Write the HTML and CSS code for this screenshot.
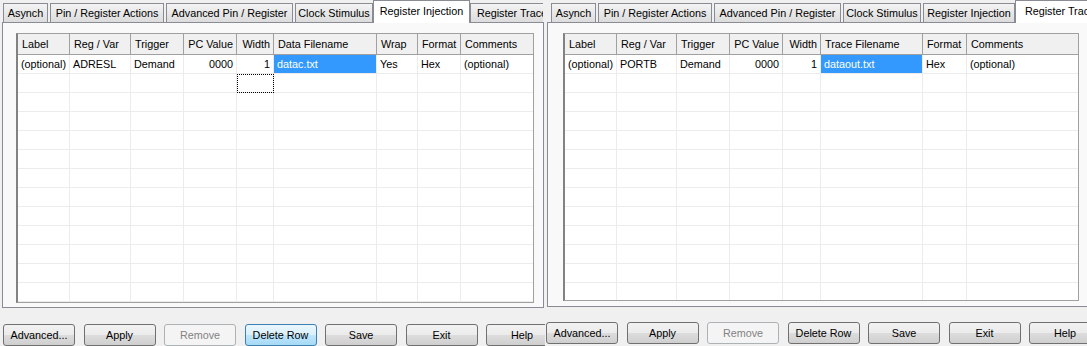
FILE: index.html
```html
<!DOCTYPE html>
<html>
<head>
<meta charset="utf-8">
<title>Stimulus</title>
<link rel="stylesheet" href="styles.css">
</head>
<body>
<div class="screen">
  <section class="panel panel-left">
    <div class="tabs">
      <div class="tab t-asynch">Asynch</div>
      <div class="tab t-pin">Pin / Register Actions</div>
      <div class="tab t-adv">Advanced Pin / Register</div>
      <div class="tab t-clock">Clock Stimulus</div>
      <div class="tab t-inj selected">Register Injection</div>
      <div class="tab t-trace">Register Trace</div>
    </div>
    <div class="tabbody">
      <div class="grid">
        <div class="row head">
          <div class="cell">Label</div><div class="cell">Reg / Var</div><div class="cell">Trigger</div><div class="cell num">PC Value</div><div class="cell num">Width</div><div class="cell">Data Filename</div><div class="cell">Wrap</div><div class="cell">Format</div><div class="cell">Comments</div>
        </div>
        <div class="row">
          <div class="cell">(optional)</div><div class="cell">ADRESL</div><div class="cell">Demand</div><div class="cell num">0000</div><div class="cell num">1</div><div class="cell sel">datac.txt</div><div class="cell">Yes</div><div class="cell">Hex</div><div class="cell">(optional)</div>
        </div>
        <div class="row"><div class="cell"></div><div class="cell"></div><div class="cell"></div><div class="cell"></div><div class="cell focus"></div><div class="cell"></div><div class="cell"></div><div class="cell"></div><div class="cell"></div></div>
        <div class="row"><div class="cell"></div><div class="cell"></div><div class="cell"></div><div class="cell"></div><div class="cell"></div><div class="cell"></div><div class="cell"></div><div class="cell"></div><div class="cell"></div></div>
        <div class="row"><div class="cell"></div><div class="cell"></div><div class="cell"></div><div class="cell"></div><div class="cell"></div><div class="cell"></div><div class="cell"></div><div class="cell"></div><div class="cell"></div></div>
        <div class="row"><div class="cell"></div><div class="cell"></div><div class="cell"></div><div class="cell"></div><div class="cell"></div><div class="cell"></div><div class="cell"></div><div class="cell"></div><div class="cell"></div></div>
        <div class="row"><div class="cell"></div><div class="cell"></div><div class="cell"></div><div class="cell"></div><div class="cell"></div><div class="cell"></div><div class="cell"></div><div class="cell"></div><div class="cell"></div></div>
        <div class="row"><div class="cell"></div><div class="cell"></div><div class="cell"></div><div class="cell"></div><div class="cell"></div><div class="cell"></div><div class="cell"></div><div class="cell"></div><div class="cell"></div></div>
        <div class="row"><div class="cell"></div><div class="cell"></div><div class="cell"></div><div class="cell"></div><div class="cell"></div><div class="cell"></div><div class="cell"></div><div class="cell"></div><div class="cell"></div></div>
        <div class="row"><div class="cell"></div><div class="cell"></div><div class="cell"></div><div class="cell"></div><div class="cell"></div><div class="cell"></div><div class="cell"></div><div class="cell"></div><div class="cell"></div></div>
        <div class="row"><div class="cell"></div><div class="cell"></div><div class="cell"></div><div class="cell"></div><div class="cell"></div><div class="cell"></div><div class="cell"></div><div class="cell"></div><div class="cell"></div></div>
        <div class="row"><div class="cell"></div><div class="cell"></div><div class="cell"></div><div class="cell"></div><div class="cell"></div><div class="cell"></div><div class="cell"></div><div class="cell"></div><div class="cell"></div></div>
        <div class="row"><div class="cell"></div><div class="cell"></div><div class="cell"></div><div class="cell"></div><div class="cell"></div><div class="cell"></div><div class="cell"></div><div class="cell"></div><div class="cell"></div></div>
        <div class="row"><div class="cell"></div><div class="cell"></div><div class="cell"></div><div class="cell"></div><div class="cell"></div><div class="cell"></div><div class="cell"></div><div class="cell"></div><div class="cell"></div></div>
        <div class="row"><div class="cell"></div><div class="cell"></div><div class="cell"></div><div class="cell"></div><div class="cell"></div><div class="cell"></div><div class="cell"></div><div class="cell"></div><div class="cell"></div></div>
      </div>
    </div>
    <div class="buttons">
      <button class="btn">Advanced...</button>
      <button class="btn">Apply</button>
      <button class="btn" disabled>Remove</button>
      <button class="btn hot">Delete Row</button>
      <button class="btn">Save</button>
      <button class="btn">Exit</button>
      <button class="btn">Help</button>
    </div>
  </section>

  <section class="panel panel-right">
    <div class="tabs">
      <div class="tab t-asynch">Asynch</div>
      <div class="tab t-pin">Pin / Register Actions</div>
      <div class="tab t-adv">Advanced Pin / Register</div>
      <div class="tab t-clock">Clock Stimulus</div>
      <div class="tab t-inj">Register Injection</div>
      <div class="tab t-trace selected">Register Trace</div>
    </div>
    <div class="tabbody">
      <div class="grid">
        <div class="row head">
          <div class="cell">Label</div><div class="cell">Reg / Var</div><div class="cell">Trigger</div><div class="cell num">PC Value</div><div class="cell num">Width</div><div class="cell">Trace Filename</div><div class="cell">Format</div><div class="cell">Comments</div>
        </div>
        <div class="row">
          <div class="cell">(optional)</div><div class="cell">PORTB</div><div class="cell">Demand</div><div class="cell num">0000</div><div class="cell num">1</div><div class="cell sel">dataout.txt</div><div class="cell">Hex</div><div class="cell">(optional)</div>
        </div>
        <div class="row"><div class="cell"></div><div class="cell"></div><div class="cell"></div><div class="cell"></div><div class="cell"></div><div class="cell"></div><div class="cell"></div><div class="cell"></div></div>
        <div class="row"><div class="cell"></div><div class="cell"></div><div class="cell"></div><div class="cell"></div><div class="cell"></div><div class="cell"></div><div class="cell"></div><div class="cell"></div></div>
        <div class="row"><div class="cell"></div><div class="cell"></div><div class="cell"></div><div class="cell"></div><div class="cell"></div><div class="cell"></div><div class="cell"></div><div class="cell"></div></div>
        <div class="row"><div class="cell"></div><div class="cell"></div><div class="cell"></div><div class="cell"></div><div class="cell"></div><div class="cell"></div><div class="cell"></div><div class="cell"></div></div>
        <div class="row"><div class="cell"></div><div class="cell"></div><div class="cell"></div><div class="cell"></div><div class="cell"></div><div class="cell"></div><div class="cell"></div><div class="cell"></div></div>
        <div class="row"><div class="cell"></div><div class="cell"></div><div class="cell"></div><div class="cell"></div><div class="cell"></div><div class="cell"></div><div class="cell"></div><div class="cell"></div></div>
        <div class="row"><div class="cell"></div><div class="cell"></div><div class="cell"></div><div class="cell"></div><div class="cell"></div><div class="cell"></div><div class="cell"></div><div class="cell"></div></div>
        <div class="row"><div class="cell"></div><div class="cell"></div><div class="cell"></div><div class="cell"></div><div class="cell"></div><div class="cell"></div><div class="cell"></div><div class="cell"></div></div>
        <div class="row"><div class="cell"></div><div class="cell"></div><div class="cell"></div><div class="cell"></div><div class="cell"></div><div class="cell"></div><div class="cell"></div><div class="cell"></div></div>
        <div class="row"><div class="cell"></div><div class="cell"></div><div class="cell"></div><div class="cell"></div><div class="cell"></div><div class="cell"></div><div class="cell"></div><div class="cell"></div></div>
        <div class="row"><div class="cell"></div><div class="cell"></div><div class="cell"></div><div class="cell"></div><div class="cell"></div><div class="cell"></div><div class="cell"></div><div class="cell"></div></div>
        <div class="row"><div class="cell"></div><div class="cell"></div><div class="cell"></div><div class="cell"></div><div class="cell"></div><div class="cell"></div><div class="cell"></div><div class="cell"></div></div>
        <div class="row"><div class="cell"></div><div class="cell"></div><div class="cell"></div><div class="cell"></div><div class="cell"></div><div class="cell"></div><div class="cell"></div><div class="cell"></div></div>
      </div>
    </div>
    <div class="buttons">
      <button class="btn">Advanced...</button>
      <button class="btn">Apply</button>
      <button class="btn" disabled>Remove</button>
      <button class="btn">Delete Row</button>
      <button class="btn">Save</button>
      <button class="btn">Exit</button>
      <button class="btn">Help</button>
    </div>
  </section>
</div>
</body>
</html>
```

FILE: styles.css
```css
* { box-sizing: border-box; }
html, body { margin: 0; padding: 0; }
body {
  background: #f0f0f0;
  font-family: "Liberation Sans", Arial, sans-serif;
  font-size: 10.8px;
  color: #000;
  width: 1087px;
  height: 346px;
  overflow: hidden;
}
.screen { display: flex; height: 346px; }
.panel { flex: none; overflow: hidden; height: 346px; }
.panel-left { width: 545px; }
.panel-right { width: 542px; }

/* tabs */
.tabs {
  display: flex;
  align-items: flex-start;
  height: 23px;
  margin-bottom: -1px;
  padding-left: 3px;
  width: 543px;
  overflow: hidden;
  position: relative;
  z-index: 1;
}
.panel-right .tabs { padding-left: 6px; width: 542px; }
.tab {
  flex: none;
  height: 19px;
  margin-top: 3px;
  margin-right: 2px;
  border: 1px solid #898c95;
  border-bottom: none;
  background: linear-gradient(#f3f3f3, #e8e8e8 50%, #dcdcdc);
  text-align: center;
  line-height: 18px;
  white-space: nowrap;
  overflow: hidden;
}
.t-asynch { width: 45px; }
.t-pin { width: 114px; }
.t-adv { width: 127px; }
.t-clock { width: 78px; }
.t-inj { width: 92px; }
.t-trace { width: 84px; }
.tab.selected {
  margin-top: 0;
  height: 23px;
  margin-left: -2px;
  margin-right: 0;
  padding: 0 2px;
  background: #fff;
  line-height: 21px;
}
.t-inj.selected { width: 97px; }
.t-trace.selected { width: 90px; }

/* tab page */
.tabbody {
  margin-left: 2px;
  width: 542px;
  height: 286px;
  border: 1px solid #898c95;
  background: #f9f9f9;
  padding: 10px 0 0 13px;
}
.panel-right .tabbody { height: 285px; padding-left: 15px; width: 545px; }

/* grid */
.grid {
  width: 518px;
  height: 270px;
  background: #fff;
  border-top: 1px solid #a0a0a0;
  border-left: 2px solid #828282;
  border-right: 1px solid #a0a0a0;
  border-bottom: 1px solid #a0a0a0;
  overflow: hidden;
}
.panel-right .grid { width: 516px; height: 268px; }
.row { display: grid; height: 19px; }
.panel-left .row { grid-template-columns: 52px 61px 53px 53px 37px 103px 41px 43px 72px; }
.panel-right .row { grid-template-columns: 52px 60px 53px 53px 38px 102px 44px 111px; }
.row.head { height: 21px; background: #f0f0f0; }
.cell {
  border-right: 1px solid #ececec;
  border-bottom: 1px solid #ececec;
  padding: 0 3px;
  line-height: 18px;
  white-space: nowrap;
  overflow: hidden;
}
.cell:last-child { border-right: none; }
.head .cell {
  border-right-color: #a0a0a0;
  border-bottom-color: #a0a0a0;
  padding: 0 3px 0 4px;
  line-height: 20px;
}
.head .cell:last-child { border-right: none; }
.cell.num { text-align: right; }
.cell.sel { background: #3399ff; background-clip: padding-box; color: #fff; }
.cell.focus { outline: 1px dotted #000; outline-offset: -1px; }

/* buttons */
.buttons {
  display: flex;
  gap: 8.5px;
  padding-left: 3px;
  margin-top: 16px;
}
.panel-right .buttons { margin-top: 15px; padding-left: 1px; }
.btn {
  flex: none;
  width: 72px;
  height: 22px;
  padding: 0;
  border: 1px solid #707070;
  border-radius: 3px;
  background: linear-gradient(#f2f2f2 0%, #ebebeb 50%, #dddddd 50%, #cfcfcf 100%);
  font-family: "Liberation Sans", Arial, sans-serif;
  font-size: 10.8px;
  color: #000;
  text-align: center;
}
.btn.hot {
  border-color: #3c7fb1;
  background: linear-gradient(#eaf6fd 0%, #d9f0fc 50%, #bee6fd 50%, #a7d9f5 100%);
}
.btn:disabled {
  border-color: #adb2b5;
  background: #f4f4f4;
  color: #838383;
}
```
